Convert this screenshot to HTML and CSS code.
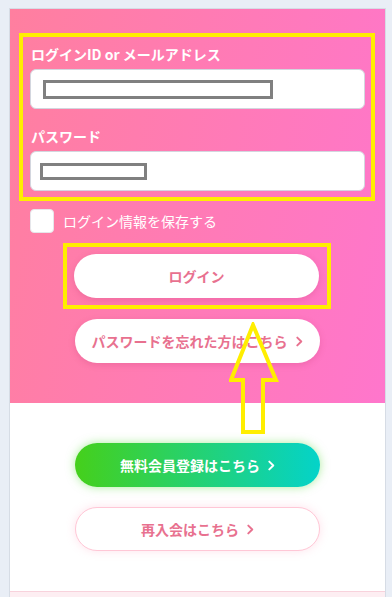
FILE: index.html
```html
<!DOCTYPE html>
<html lang="ja">
<head>
    <meta charset="UTF-8">
    <title>ログイン</title>
    <link rel="stylesheet" href="styles.css">
</head>
<body>
    <div class="card">
        <form class="login-area">
            <div class="mark fields">
                <label class="field-label">ログインID or メールアドレス</label>
                <div class="input">
                    <span class="masked masked-id"></span>
                </div>
                <label class="field-label second">パスワード</label>
                <div class="input">
                    <span class="masked masked-pw"></span>
                </div>
            </div>

            <label class="remember">
                <span class="check"></span>
                <span>ログイン情報を保存する</span>
            </label>

            <div class="mark submit-mark">
                <button type="button" class="btn btn-white">ログイン</button>
            </div>

            <button type="button" class="btn btn-white forgot">
                パスワードを忘れた方はこちら
                <svg class="chev" viewBox="0 0 8 12" width="7" height="11"><polyline points="1.5,1.5 6,6 1.5,10.5" /></svg>
            </button>
        </form>

        <div class="register-area">
            <button type="button" class="btn btn-green">
                無料会員登録はこちら
                <svg class="chev" viewBox="0 0 8 12" width="7" height="11"><polyline points="1.5,1.5 6,6 1.5,10.5" /></svg>
            </button>
            <button type="button" class="btn btn-outline">
                再入会はこちら
                <svg class="chev" viewBox="0 0 8 12" width="7" height="11"><polyline points="1.5,1.5 6,6 1.5,10.5" /></svg>
            </button>
        </div>

        <div class="card-foot"></div>

        <svg class="arrow" viewBox="0 0 50 114" width="50" height="114">
            <polygon points="24,3 2,58 14,58 14,110 34,110 34,58 47,58" />
        </svg>
    </div>
</body>
</html>
```

FILE: styles.css
```css
* {
    box-sizing: border-box;
}

body {
    margin: 0;
    padding: 8px 6px 0 9px;
    background: #e9eef6;
    font-family: "Noto Sans CJK JP", "Noto Sans", sans-serif;
    height: 597px;
    overflow: hidden;
}

.card {
    position: relative;
    width: 377px;
    border: 1px solid #d6dce5;
    background: #fff;
}

.login-area {
    margin: 0;
    padding: 24px 10px 40px 9px;
    background: linear-gradient(100deg, #ff7f9f, #ff76cc);
    display: flex;
    flex-direction: column;
}

.mark {
    border: 4px solid #ffee00;
}

.fields {
    display: flex;
    flex-direction: column;
    padding: 6px 6px 6px 7px;
}

.field-label {
    color: #fff;
    font-size: 14px;
    font-weight: bold;
    line-height: 22px;
    margin: 0 0 4px 1px;
}

.field-label.second {
    margin-top: 16px;
}

.input {
    height: 40px;
    background: #fff;
    border: 1px solid #d3d6de;
    border-radius: 6px;
    display: flex;
    align-items: center;
}

.masked {
    display: block;
    background: #fff;
    border: 3px solid #808080;
}

.masked-id {
    width: 230px;
    height: 19px;
    margin-left: 12px;
}

.masked-pw {
    width: 107px;
    height: 17px;
    margin-left: 9px;
}

.remember {
    display: flex;
    align-items: center;
    gap: 9px;
    margin: 8px 0 0 11px;
    color: #fff;
    font-size: 14px;
    line-height: 24px;
}

.check {
    width: 24px;
    height: 24px;
    background: #fff;
    border: 1px solid #e6e6ea;
    border-radius: 4px;
}

.submit-mark {
    align-self: center;
    width: 268px;
    margin-top: 10px;
    padding: 7px 8px 7px 7px;
}

.btn {
    display: flex;
    align-items: center;
    justify-content: center;
    width: 245px;
    height: 44px;
    border: none;
    border-radius: 22px;
    font-family: inherit;
    font-size: 14px;
    font-weight: bold;
    padding: 0;
    cursor: pointer;
}

.btn-white {
    background: #fff;
    color: #e8718f;
    box-shadow: 0 2px 6px rgba(190, 60, 110, 0.25);
}

.forgot {
    align-self: center;
    margin-top: 10px;
}

.chev {
    margin-left: 8px;
    fill: none;
    stroke: currentColor;
    stroke-width: 2.2;
    stroke-linecap: round;
    stroke-linejoin: round;
}

.register-area {
    display: flex;
    flex-direction: column;
    align-items: center;
    gap: 20px;
    padding: 40px 0 40px;
}

.btn-green {
    color: #fff;
    background: linear-gradient(90deg, #45d01b, #04d3c9);
    box-shadow: 0 0 10px rgba(90, 220, 60, 0.5);
}

.btn-outline {
    color: #e8718f;
    background: #fff;
    border: 1px solid #ffc7d6;
    box-shadow: 0 0 10px rgba(255, 160, 190, 0.3);
}

.card-foot {
    height: 10px;
    background: #fdeef2;
    border-top: 1px solid #f8d2dc;
}

.arrow {
    position: absolute;
    left: 219px;
    top: 313px;
    fill: none;
    stroke: #ffee00;
    stroke-width: 4;
}
```
